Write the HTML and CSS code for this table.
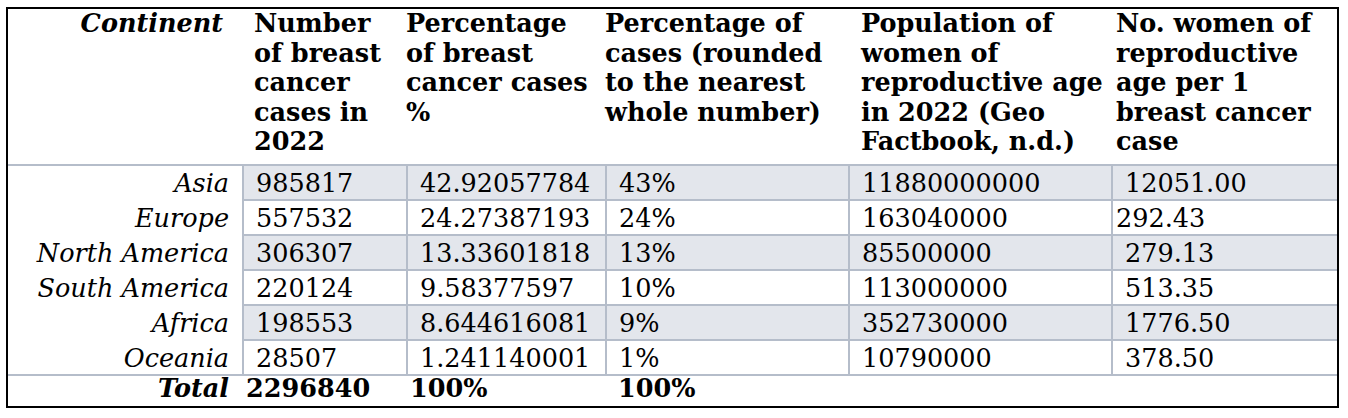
FILE: index.html
```html
<!DOCTYPE html>
<html lang="en">
<head>
<meta charset="utf-8">
<title>Breast cancer cases by continent</title>
<link rel="stylesheet" href="styles.css">
</head>
<body>
<div class="page">
  <div class="tbl">
    <div class="hd hd-cont">Continent</div>
    <div class="hd hd-c2">Number<br>of breast<br>cancer<br>cases in<br>2022</div>
    <div class="hd hd-c3">Percentage<br>of breast<br>cancer cases<br>%</div>
    <div class="hd hd-c4">Percentage of<br>cases (rounded<br>to the nearest<br>whole number)</div>
    <div class="hd hd-c5">Population of<br>women of<br>reproductive age<br>in 2022 (Geo<br>Factbook, n.d.)</div>
    <div class="hd hd-c6">No. women of<br>reproductive<br>age per 1<br>breast cancer<br>case</div>

    <div class="cont">Asia</div>
    <div class="data shade">985817</div>
    <div class="data shade">42.92057784</div>
    <div class="data shade">43%</div>
    <div class="data shade">11880000000</div>
    <div class="data shade">12051.00</div>

    <div class="cont">Europe</div>
    <div class="data">557532</div>
    <div class="data">24.27387193</div>
    <div class="data">24%</div>
    <div class="data">163040000</div>
    <div class="data tight">292.43</div>

    <div class="cont">North America</div>
    <div class="data shade">306307</div>
    <div class="data shade">13.33601818</div>
    <div class="data shade">13%</div>
    <div class="data shade">85500000</div>
    <div class="data shade">279.13</div>

    <div class="cont">South America</div>
    <div class="data">220124</div>
    <div class="data">9.58377597</div>
    <div class="data">10%</div>
    <div class="data">113000000</div>
    <div class="data">513.35</div>

    <div class="cont">Africa</div>
    <div class="data shade">198553</div>
    <div class="data shade">8.644616081</div>
    <div class="data shade">9%</div>
    <div class="data shade">352730000</div>
    <div class="data shade">1776.50</div>

    <div class="cont cont-last">Oceania</div>
    <div class="data">28507</div>
    <div class="data">1.241140001</div>
    <div class="data">1%</div>
    <div class="data">10790000</div>
    <div class="data">378.50</div>

    <div class="tot tot-label">Total</div>
    <div class="tot tot-c2">2296840</div>
    <div class="tot tot-c3">100%</div>
    <div class="tot tot-c4">100%</div>
    <div class="tot"></div>
    <div class="tot"></div>
  </div>
</div>
</body>
</html>
```

FILE: styles.css
```css
html, body {
  margin: 0;
  padding: 0;
  background: #ffffff;
}

.page {
  padding: 7px 0 0 6px;
}

.tbl {
  display: grid;
  grid-template-columns: 234px 164px 199px 243px 263px 226px;
  grid-template-rows: 157px repeat(6, 35px) 30px;
  width: max-content;
  border: 2px solid #000000;
  font-family: "DejaVu Serif", Georgia, serif;
  font-size: 25.5px;
  color: #000000;
}

.tbl > div {
  box-sizing: border-box;
  white-space: nowrap;
  overflow: visible;
}

/* header */
.hd {
  font-weight: bold;
  line-height: 29.6px;
  border-bottom: 2px solid #b5bdca;
  padding-left: 13px;
}

.hd-cont {
  font-style: italic;
  text-align: right;
  padding-right: 19px;
}

.hd-c2 { padding-left: 12px; }
.hd-c3 { padding-left: 0; }
.hd-c4 { padding-left: 0; }
.hd-c5 { padding-left: 13px; }
.hd-c6 { padding-left: 5px; }

/* body */
.cont {
  font-style: italic;
  text-align: right;
  padding-right: 13px;
  padding-top: 3px;
  line-height: 29px;
}

.cont-last {
  border-bottom: 2px solid #b5bdca;
}

.data {
  border-left: 2px solid #b5bdca;
  border-bottom: 2px solid #b5bdca;
  padding-left: 12px;
  padding-top: 3px;
  line-height: 29px;
}

.shade {
  background: #e3e6ec;
}

.tight {
  padding-left: 3px;
}

/* total row */
.tot {
  font-weight: bold;
  line-height: 25.5px;
}

.tot-label {
  font-style: italic;
  text-align: right;
  padding-right: 13px;
}

.tot-c2 { padding-left: 4px; }
.tot-c3 { padding-left: 4px; }
.tot-c4 { padding-left: 13px; }
```
